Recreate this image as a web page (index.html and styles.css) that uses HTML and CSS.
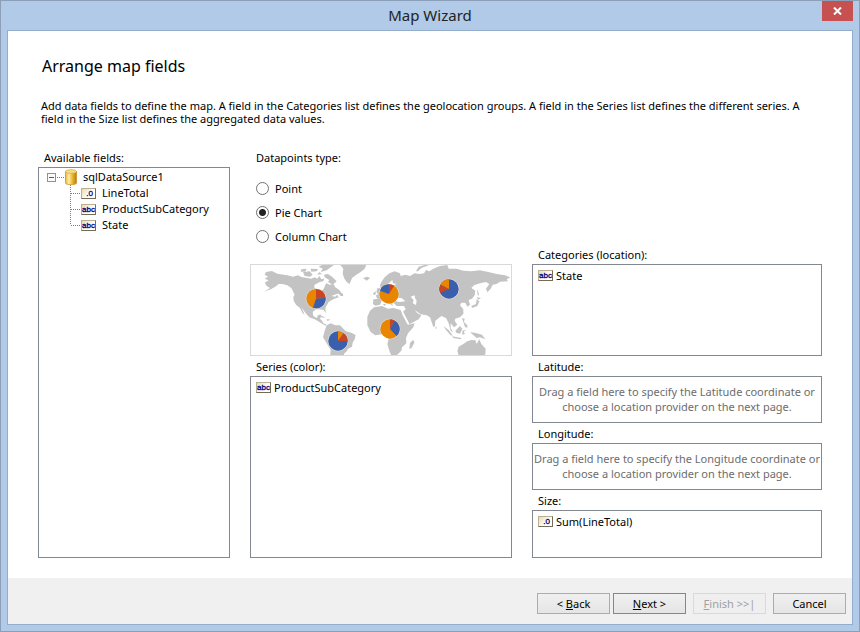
FILE: index.html
```html
<!DOCTYPE html>
<html lang="en">
<head>
<meta charset="utf-8">
<title>Map Wizard</title>
<link rel="stylesheet" href="styles.css">
</head>
<body>
<div class="window">
  <header class="titlebar">
    <span class="caption">Map Wizard</span>
    <button class="close" type="button" aria-label="Close">
      <svg width="9" height="8" viewBox="0 0 9 8"><path d="M1 .5 8 7.5M8 .5 1 7.5" stroke="#fff" stroke-width="2" fill="none"/></svg>
    </button>
  </header>
  <form class="page">
    <main class="content">
      <h1>Arrange map fields</h1>
      <p class="intro">Add data fields to define the map. A field in the Categories list defines the geolocation groups. A field in the Series list defines the different series. A field in the Size list defines the aggregated data values.</p>
      <div class="columns">
        <section class="column">
          <h2>Available fields:</h2>
          <div class="box grow">
            <div class="root">
              <button class="toggle" type="button" aria-label="Collapse"><svg width="9" height="9" viewBox="0 0 9 9"><rect x=".5" y=".5" width="8" height="8" fill="#fafafa" stroke="#919191"/><path d="M2 4.500h5" stroke="#3d5ba8"/></svg></button>
              <span class="dots"></span>
              <svg class="db" width="12" height="16" viewBox="0 0 12 16">
                <defs><linearGradient id="gold"><stop offset="0" stop-color="#e9b52c"/><stop offset=".3" stop-color="#ffedaa"/><stop offset=".6" stop-color="#eebb35"/><stop offset="1" stop-color="#b67b0c"/></linearGradient></defs>
                <path d="M.5 2.500v11.500c0 2.300 11 2.300 11 0V2.500z" fill="url(#gold)" stroke="#c38c1c" stroke-width=".7"/>
                <ellipse cx="6" cy="2.500" rx="5.500" ry="1.900" fill="#f8dc83" stroke="#c9952a" stroke-width=".5"/>
              </svg>
              <span>sqlDataSource1</span>
            </div>
            <ul class="fields">
              <li><span class="dots"></span><span class="tag number">.0</span>LineTotal</li>
              <li><span class="dots"></span><span class="tag">abc</span>ProductSubCategory</li>
              <li><span class="dots"></span><span class="tag">abc</span>State</li>
            </ul>
          </div>
        </section>
        <section class="column">
          <h2>Datapoints type:</h2>
          <div class="options">
            <label><input type="radio" name="type"><span>Point</span></label>
            <label><input type="radio" name="type" checked><span>Pie Chart</span></label>
            <label><input type="radio" name="type"><span>Column Chart</span></label>
          </div>
          <svg class="map" viewBox="9 9 780 270" preserveAspectRatio="none" role="img" aria-label="World map with pie charts">
            <g fill="#c3c3c3">
              <path d="M54 30 72 27 88 35 118 40 135 44 150 40 160 45 190 50 200 46 208 50 214 42 220 51 229 50 226 58 215 60 200 68 198 76 208 82 225 84 230 74 234 64 246 68 256 66 262 76 274 84 280 92 266 96 250 102 262 104 268 98 272 106 256 112 242 120 234 134 232 142 234 154 226 143 204 142 194 150 196 162 206 168 212 158 220 158 216 170 222 176 226 184 236 188 232 191 218 182 200 172 184 166 172 152 160 136 170 158 164 154 156 138 144 128 137 116 136 104 140 98 130 78 118 70 104 66 92 66 82 74 68 82 48 89 66 78 56 72 50 62 62 55 50 50 60 44 50 38z"/>
              <path d="M165 31 185 28 194 38 186 44 170 42zM160 22 176 20 172 29 158 29zM188 20 210 21 206 28 190 29zM212 14 228 6H262L248 16 236 25 218 30 224 20zM214 30 222 36 208 38zM228 38 240 36 252 44 266 58 254 68 240 60 244 54 230 46zM264 6H356L350 20 338 30 325 38 312 48 305 66 296 60 288 48 284 34 286 20 278 10zM345 48 358 44 366 48 356 56zM270 92 284 94 286 102 278 102zM206 160 222 162 234 168 218 166zM236 171 248 173 238 177z"/>
              <path d="M236 190 248 184 262 190 276 190 286 200 294 208 310 212 323 219 320 232 314 242 312 254 300 260 296 268 288 276 286 285H246L248 264 236 244 225 226 230 206zM388 79 396 78 396 90 404 101 386 104 391 96 385 90zM376 92 383 88 383 98 376 98zM376 112 394 110 402 114 396 128 382 131 375 126z"/>
              <g transform="translate(396 0)">
                <path d="M4 60 14 46 28 34 44 28 60 34 62 42 76 38 90 42 104 34 118 36 132 34 138 24 148 28 160 20 180 12 202 9 206 20 230 20 250 26 275 28 300 25 325 30 350 36 375 40 391 46 380 52 384 58 360 59 350 66 338 68 332 80 322 91 318 80 328 66 318 60 300 64 282 70 274 78 286 86 284 100 276 110 266 114 270 128 262 134 256 122 244 122 240 130 250 142 250 156 240 166 226 170 224 176 232 188 222 196 212 184 212 198 220 212 212 206 206 184 198 168 184 162 166 176 165 192 160 195 150 166 140 160 122 157 104 144 112 154 124 160 116 172 88 187 80 172 68 150 77 142 72 132 50 132 42 124 36 118 38 132 28 124 12 112 0 114-10 108-12 100 4 92 0 70z"/>
                <path d="M-38 164-30 146-18 136 6 132 24 140 40 138 62 144 68 160 84 188 104 184 100 196 84 214 78 228 79 244 66 256 64 266 50 280 36 285 28 266 22 246 26 232 10 216-14 220-28 210-38 190z"/>
                <path d="M100 233 103 242 94 259 88 260 90 243zM108 28 116 14 140 7 150 8 124 18 114 28zM290 80 297 96 294 103zM290 106 303 108 294 113zM290 112 298 118 292 132 276 138 274 132 288 126zM190 192 206 204 219 222 211 219 200 206zM216 223 244 228 242 232 220 228zM226 206 240 192 247 200 240 215 229 212zM247 206 259 203 251 209 255 216 247 218zM246 168 254 170 252 180 262 190 262 197 255 195zM270 211 284 212 306 218 316 232 300 226 290 228 280 219zM236 254 250 246 262 238 274 234 286 235 290 246 298 232 304 246 317 260 316 276 311 285H238L232 268zM167 192 171 199 167 200zM218 164 225 163 220 170zM246 148 250 150 247 157zM-2 116 2 122-2 128zM8 126 18 126 15 132z"/>
              </g>
            </g>
            <g fill="#fff">
              <path d="M443 112 450 107 462 109 472 118 456 120 444 118zM488 104 500 100 501 108 506 116 504 129 494 124 497 115zM420 66 433 54 435 64 446 66 432 72 426 78z"/>
              <path d="M464 146 484 186 478 186 462 152z"/>
            </g>
            <g stroke="#fff" stroke-opacity=".35" stroke-width="3">
              <circle cx="204" cy="110" r="30" fill="none"/><circle cx="270" cy="237" r="30" fill="none"/><circle cx="423" cy="96" r="30" fill="none"/><circle cx="603" cy="81" r="30" fill="none"/><circle cx="426" cy="201" r="30" fill="none"/>
            </g>
            <g transform="translate(204 110)">
              <circle r="29" fill="#ea8500"/><path d="M0 0V-29A29 29 0 0 1 28.900-2.500z" fill="#c84524"/><path d="M0 0 28.900-2.500A29 29 0 0 1-9 27.600z" fill="#3a5fac"/>
            </g>
            <g transform="translate(270 237)">
              <circle r="29" fill="#3a5fac"/><path d="M0 0V-29A29 29 0 0 1 17-23.500z" fill="#ea8500"/><path d="M0 0 17-23.500A29 29 0 0 1 29 1z" fill="#c84524"/>
            </g>
            <g transform="translate(423 96)">
              <circle r="29" fill="#ea8500"/><path d="M0 0V-29A29 29 0 0 1 15.400-24.600z" fill="#c84524"/><path d="M0 0-27.300-9.900A29 29 0 0 1 0-29z" fill="#3a5fac"/>
            </g>
            <g transform="translate(603 81)">
              <circle r="29" fill="#3a5fac"/><path d="M0 0-26.300 12.300A29 29 0 0 1-25.800-13.200z" fill="#c84524"/><path d="M0 0-25.800-13.200A29 29 0 0 1 0-29z" fill="#ea8500"/>
            </g>
            <g transform="translate(426 201)">
              <circle r="29" fill="#ea8500"/><path d="M0 0V-29A29 29 0 0 1 13.200-25.800z" fill="#c84524"/><path d="M0 0 13.200-25.800A29 29 0 0 1 19.800 21.200z" fill="#3a5fac"/>
            </g>
          </svg>
          <h2>Series (color):</h2>
          <div class="box grow"><div class="item"><span class="tag">abc</span>ProductSubCategory</div></div>
        </section>
        <section class="column end">
          <h2>Categories (location):</h2>
          <div class="box tall"><div class="item"><span class="tag">abc</span>State</div></div>
          <h2>Latitude:</h2>
          <div class="box hint">Drag a field here to specify the Latitude coordinate or choose a location provider on the next page.</div>
          <h2>Longitude:</h2>
          <div class="box hint">Drag a field here to specify the Longitude coordinate or choose a location provider on the next page.</div>
          <h2>Size:</h2>
          <div class="box short"><div class="item"><span class="tag number">.0</span>Sum(LineTotal)</div></div>
        </section>
      </div>
    </main>
    <footer class="actions">
      <div class="pair">
        <button class="btn" type="button">&lt; <u>B</u>ack</button>
        <button class="btn primary" type="button"><u>N</u>ext &gt;</button>
      </div>
      <button class="btn" type="button" disabled><u>F</u>inish &gt;&gt;|</button>
      <button class="btn" type="button">Cancel</button>
    </footer>
  </form>
</div>
</body>
</html>
```
FILE: styles.css
```css
* {
  box-sizing: border-box;
}

body {
  margin: 0;
  font: 11px/16px "Noto Sans", "Segoe UI", sans-serif;
  color: #000;
}

.window {
  display: flex;
  flex-direction: column;
  min-height: 100vh;
  padding: 0 6px 6px;
  border: 1px solid #8c9fb8;
  background: #b0cae7;
}

.titlebar {
  display: grid;
  grid-template-columns: 1fr auto 1fr;
  height: 29px;
}

.caption {
  grid-column: 2;
  font-size: 15px;
  line-height: 29px;
  color: #222;
}

.close {
  display: flex;
  align-items: center;
  justify-content: center;
  justify-self: end;
  width: 31px;
  height: 20px;
  padding: 0;
  border: 0;
  background: #c75050;
}

.page {
  display: flex;
  flex: 1;
  flex-direction: column;
  border: 1px solid #93adca;
  background: #fff;
}

.content {
  display: flex;
  flex: 1;
  flex-direction: column;
  padding: 23px 30px 20px;
}

h1 {
  margin: 0 4px;
  font-size: 16px;
  font-weight: 400;
  line-height: 24px;
}

.intro {
  margin: 21px 3px 22px;
  line-height: 13px;
}

.columns {
  display: grid;
  flex: 1;
  grid-template-columns: 192fr 262fr 290fr;
  gap: 20px;
}

.column {
  display: flex;
  flex-direction: column;
  min-width: 0;
}

.end {
  justify-content: flex-end;
}

h2 {
  margin: 0 6px;
  padding-top: 2px;
  font-size: 11px;
  font-weight: 400;
  line-height: 18px;
}

.box {
  border: 1px solid #828790;
  background: #fff;
}

.grow {
  flex: 1;
}

.tall {
  height: 92px;
}

.short {
  height: 48px;
}

.hint {
  height: 47px;
  padding: 7px 0;
  line-height: 15px;
  text-align: center;
  color: #6d6d6d;
}

.root {
  display: flex;
  align-items: center;
  height: 16px;
  margin: 1px 0 0 8px;
}

.toggle {
  display: flex;
  padding: 0;
  border: 0;
  background: none;
}

.dots {
  width: 7px;
  margin: 0 1px;
  border-top: 1px dotted #808080;
}

.db {
  margin-right: 6px;
}

.fields {
  margin: 0 0 0 31px;
  padding: 0;
  list-style: none;
}

.fields li {
  display: flex;
  align-items: center;
  height: 16px;
  background: repeating-linear-gradient(#808080 0 1px, transparent 1px 2px) 0 0 / 1px 100% no-repeat;
}

.fields li:last-child {
  background-size: 1px 8px;
}

.fields .dots {
  width: 9px;
}

.tag {
  display: flex;
  justify-content: center;
  width: 15px;
  height: 11px;
  margin-right: 6px;
  border: 1px solid;
  border-color: #b9b094 #756c58 #756c58 #b9b094;
  background: linear-gradient(135deg, #e6dcae, #fff 60%);
  font: 8px/9px "Liberation Sans", sans-serif;
  color: #00007c;
  -webkit-text-stroke: 0.3px #00007c;
}

.number {
  justify-content: flex-end;
  padding-right: 2px;
}

.item {
  display: flex;
  align-items: center;
  height: 16px;
  margin: 3px 5px;
}

.item .tag {
  margin: 0 3px 2px 0;
}

.options {
  display: flex;
  flex-direction: column;
  padding: 9px 6px 16px;
}

.options label {
  display: flex;
  align-items: center;
  height: 24px;
}

.options span {
  padding-top: 1px;
}

.options input {
  width: 13px;
  height: 13px;
  margin: 0 6px 0 0;
  border: 1px solid #707070;
  border-radius: 50%;
  appearance: none;
  background: #fff;
}

.options input:checked {
  background: radial-gradient(circle, #222 0 3px, #fff 4px);
}

.map {
  display: block;
  width: 100%;
  height: 92px;
  border: 1px solid #d9d9d9;
}

.actions {
  display: flex;
  gap: 7px;
  justify-content: flex-end;
  padding: 15px 6px 10px;
  background: #f0f0f0;
}

.pair {
  display: flex;
  gap: 3px;
}

.btn {
  width: 73px;
  height: 21px;
  padding: 0;
  border: 1px solid #acacac;
  background: linear-gradient(#f0f0f0, #e5e5e5);
  font: inherit;
  color: #000;
}

.primary {
  border-color: #3399ff;
}

.btn:disabled {
  border-color: #d9d9d9;
  background: #efefef;
  color: #a0a0a0;
}
```
